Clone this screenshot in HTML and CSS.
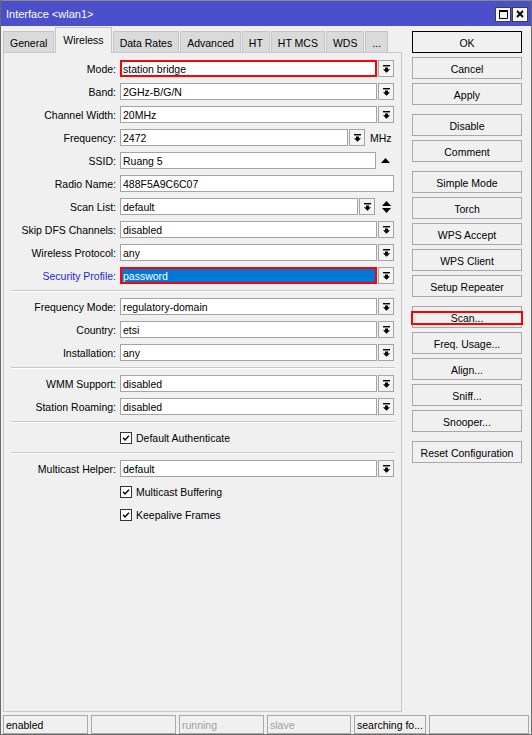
FILE: index.html
```html
<!DOCTYPE html>
<html>
<head>
<meta charset="utf-8">
<link rel="stylesheet" href="styles.css">
</head>
<body>
<svg class="defs" width="0" height="0">
  <symbol id="dd" viewBox="0 0 7 8"><rect x="0" y="0" width="7" height="1.4"/><path d="M2 2.4h3v1.8h2L3.5 7.8 0 4.2h2z"/></symbol>
  <symbol id="chk" viewBox="0 0 12 12"><path d="M2.5 5.8 4.8 8.3 9.5 3.4" fill="none" stroke="#000" stroke-width="1.7"/></symbol>
</svg>
<div class="window">
  <div class="titlebar">
    <span class="title">Interface &lt;wlan1&gt;</span>
    <div class="tb-btns">
      <span class="tb-btn"><svg width="9" height="9" viewBox="0 0 9 9"><path d="M0.5 0.5h8v8h-8z" fill="none" stroke="#000"/><rect x="0" y="0" width="9" height="2"/></svg></span>
      <span class="tb-btn"><svg width="8" height="8" viewBox="0 0 8 8"><path d="M1 1 7 7M7 1 1 7" stroke="#000" stroke-width="1.8"/></svg></span>
    </div>
  </div>
  <div class="main">
    <div class="left">
      <div class="tabs">
        <span class="tab">General</span>
        <span class="tab active">Wireless</span>
        <span class="tab">Data Rates</span>
        <span class="tab">Advanced</span>
        <span class="tab">HT</span>
        <span class="tab">HT MCS</span>
        <span class="tab">WDS</span>
        <span class="tab">...</span>
      </div>
      <div class="panel">
        <div class="form">
          <div class="row"><span class="label">Mode:</span><div class="ctl"><span class="field hl">station bridge</span><span class="dd"><svg width="7" height="8"><use href="#dd"/></svg></span></div></div>
          <div class="row"><span class="label">Band:</span><div class="ctl"><span class="field">2GHz-B/G/N</span><span class="dd"><svg width="7" height="8"><use href="#dd"/></svg></span></div></div>
          <div class="row"><span class="label">Channel Width:</span><div class="ctl"><span class="field">20MHz</span><span class="dd"><svg width="7" height="8"><use href="#dd"/></svg></span></div></div>
          <div class="row"><span class="label">Frequency:</span><div class="ctl"><span class="field">2472</span><span class="dd"><svg width="7" height="8"><use href="#dd"/></svg></span><span class="unit">MHz</span></div></div>
          <div class="row"><span class="label">SSID:</span><div class="ctl"><span class="field">Ruang 5</span><span class="slot"><svg width="9" height="5" viewBox="0 0 9 5"><path d="M4.5 0 9 5H0z"/></svg></span></div></div>
          <div class="row"><span class="label">Radio Name:</span><div class="ctl"><span class="field">488F5A9C6C07</span></div></div>
          <div class="row"><span class="label">Scan List:</span><div class="ctl"><span class="field">default</span><span class="dd"><svg width="7" height="8"><use href="#dd"/></svg></span><span class="slot wide"><svg width="9" height="12" viewBox="0 0 9 12"><path d="M4.5 0 9 5H0zM0 7h9l-4.5 5z"/></svg></span></div></div>
          <div class="row"><span class="label">Skip DFS Channels:</span><div class="ctl"><span class="field">disabled</span><span class="dd"><svg width="7" height="8"><use href="#dd"/></svg></span></div></div>
          <div class="row"><span class="label">Wireless Protocol:</span><div class="ctl"><span class="field">any</span><span class="dd"><svg width="7" height="8"><use href="#dd"/></svg></span></div></div>
          <div class="row"><span class="label blue">Security Profile:</span><div class="ctl"><span class="field hl sel">password</span><span class="dd"><svg width="7" height="8"><use href="#dd"/></svg></span></div></div>
          <div class="sep"></div>
          <div class="row"><span class="label">Frequency Mode:</span><div class="ctl"><span class="field">regulatory-domain</span><span class="dd"><svg width="7" height="8"><use href="#dd"/></svg></span></div></div>
          <div class="row"><span class="label">Country:</span><div class="ctl"><span class="field">etsi</span><span class="dd"><svg width="7" height="8"><use href="#dd"/></svg></span></div></div>
          <div class="row"><span class="label">Installation:</span><div class="ctl"><span class="field">any</span><span class="dd"><svg width="7" height="8"><use href="#dd"/></svg></span></div></div>
          <div class="sep"></div>
          <div class="row"><span class="label">WMM Support:</span><div class="ctl"><span class="field">disabled</span><span class="dd"><svg width="7" height="8"><use href="#dd"/></svg></span></div></div>
          <div class="row"><span class="label">Station Roaming:</span><div class="ctl"><span class="field">disabled</span><span class="dd"><svg width="7" height="8"><use href="#dd"/></svg></span></div></div>
          <div class="sep"></div>
          <div class="row"><span class="label"></span><div class="check"><span class="box"><svg width="12" height="12"><use href="#chk"/></svg></span><span>Default Authenticate</span></div></div>
          <div class="sep"></div>
          <div class="row"><span class="label">Multicast Helper:</span><div class="ctl"><span class="field">default</span><span class="dd"><svg width="7" height="8"><use href="#dd"/></svg></span></div></div>
          <div class="row"><span class="label"></span><div class="check"><span class="box"><svg width="12" height="12"><use href="#chk"/></svg></span><span>Multicast Buffering</span></div></div>
          <div class="row"><span class="label"></span><div class="check"><span class="box"><svg width="12" height="12"><use href="#chk"/></svg></span><span>Keepalive Frames</span></div></div>
        </div>
      </div>
    </div>
    <div class="actions">
      <span class="btn default">OK</span>
      <span class="btn">Cancel</span>
      <span class="btn">Apply</span>
      <span class="btn group">Disable</span>
      <span class="btn">Comment</span>
      <span class="btn group">Simple Mode</span>
      <span class="btn">Torch</span>
      <span class="btn">WPS Accept</span>
      <span class="btn">WPS Client</span>
      <span class="btn">Setup Repeater</span>
      <span class="btn group mark">Scan...</span>
      <span class="btn">Freq. Usage...</span>
      <span class="btn">Align...</span>
      <span class="btn">Sniff...</span>
      <span class="btn">Snooper...</span>
      <span class="btn group">Reset Configuration</span>
    </div>
  </div>
  <div class="status">
    <span class="cell c1">enabled</span>
    <span class="cell c2"></span>
    <span class="cell c3 dim">running</span>
    <span class="cell c4 dim">slave</span>
    <span class="cell c5">searching fo...</span>
    <span class="cell c6"></span>
  </div>
</div>
</body>
</html>
```

FILE: styles.css
```css
* { box-sizing: border-box; }
html, body { margin: 0; padding: 0; }
body {
  width: 532px;
  height: 735px;
  overflow: hidden;
  background: #f0f0f0;
  font-family: "Liberation Sans", Arial, sans-serif;
  font-size: 10.5px;
  color: #000;
}
.defs { position: absolute; width: 0; height: 0; }

.window {
  width: 532px;
  height: 735px;
  display: flex;
  flex-direction: column;
  background: #f0f0f0;
  border-left: 1px solid #6a6a6a;
  border-right: 1px solid #6a6a6a;
  border-bottom: 1px solid #6a6a6a;
}

.titlebar {
  height: 26px;
  flex: none;
  background: #4b4fc9;
  border-top: 1px solid #8a8a8a;
  display: flex;
  align-items: center;
  padding: 1px 3px 0 5px;
  color: #fff;
}
.title { flex: 1; font-size: 11px; }
.tb-btns { display: flex; gap: 1px; }
.tb-btn {
  width: 16px;
  height: 15px;
  background: #f4f4f4;
  border: 1px solid #404040;
  display: flex;
  align-items: center;
  justify-content: center;
}

.main {
  height: 686px;
  flex: none;
  display: flex;
  padding-left: 2px;
}
.left {
  width: 399px;
  display: flex;
  flex-direction: column;
}
.tabs {
  height: 26px;
  flex: none;
  display: flex;
  align-items: flex-end;
  gap: 1px;
}
.tab {
  flex: none;
  height: 21px;
  padding: 2px 6px 0 6px;
  background: #dadada;
  border: 1px solid #c4c4c4;
  border-bottom: none;
  display: flex;
  align-items: center;
  white-space: nowrap;
}
.tab.active {
  height: 26px;
  background: #f0f0f0;
  margin-bottom: -1px;
  position: relative;
  z-index: 1;
  padding: 0 7px 2px 7px;
}
.panel {
  flex: 1;
  border: 1px solid #c8c8c8;
  padding-top: 7px;
}
.form {
  display: flex;
  flex-direction: column;
  gap: 6px;
}
.row {
  display: grid;
  grid-template-columns: 112px 274px;
  column-gap: 4px;
  height: 17px;
  align-items: center;
}
.label {
  text-align: right;
  white-space: nowrap;
  padding-top: 1px;
}
.label.blue { color: #2424dc; }
.ctl {
  display: flex;
  height: 17px;
  gap: 1px;
}
.field {
  flex: 1;
  min-width: 0;
  background: #fff;
  border: 1px solid #a4a4a4;
  padding: 1px 2px 0 2px;
  line-height: 15px;
  white-space: nowrap;
  overflow: hidden;
}
.field.hl {
  border: 2px solid #ff0000;
  line-height: 13px;
  padding-left: 1px;
}
.field.sel {
  background: #0078d7;
  color: #fff;
}
.dd {
  width: 16px;
  flex: none;
  border: 1px solid #a4a4a4;
  background: #f4f4f4;
  display: flex;
  align-items: center;
  justify-content: center;
}
.unit {
  width: 28px;
  flex: none;
  padding-left: 4px;
  line-height: 18px;
}
.slot {
  width: 17px;
  flex: none;
  display: flex;
  align-items: center;
  justify-content: center;
}
.slot.wide { width: 18px; padding-left: 3px; }
.sep {
  height: 2px;
  margin: 0 6px 0 7px;
  border-top: 1px solid #c8c8c8;
  border-bottom: 1px solid #ffffff;
}
.check {
  display: flex;
  align-items: center;
  gap: 4px;
  height: 17px;
}
.box {
  width: 12px;
  height: 12px;
  background: #fff;
  border: 1px solid #333;
  display: flex;
  align-items: center;
  justify-content: center;
}
.box svg { display: block; }

.actions {
  width: 110px;
  margin-left: 10px;
  padding-top: 5px;
  display: flex;
  flex-direction: column;
  gap: 4px;
}
.btn {
  height: 22px;
  flex: none;
  border: 1px solid #a8a8a8;
  background: #f0f0f0;
  display: flex;
  align-items: center;
  justify-content: center;
  white-space: nowrap;
  padding-top: 1px;
}
.btn.default { border-color: #000; }
.btn.group { margin-top: 5px; }
.btn.mark { position: relative; }
.btn.mark::after {
  content: "";
  position: absolute;
  left: -2px;
  right: -2px;
  top: 4px;
  bottom: 2px;
  border: 2px solid #ff0000;
}

.status {
  flex: 1;
  display: flex;
  gap: 3px;
  padding: 3px 2px 0 2px;
}
.cell {
  height: 19px;
  border: 1px solid #a8a8a8;
  padding: 1px 0 0 2px;
  line-height: 17px;
  white-space: nowrap;
  overflow: hidden;
}
.cell.dim { color: #a0a0a0; }
.c1 { width: 85px; }
.c2 { width: 85px; }
.c3 { width: 85px; }
.c4 { width: 84px; }
.c5 { width: 72px; }
.c6 { flex: 1; }
```
